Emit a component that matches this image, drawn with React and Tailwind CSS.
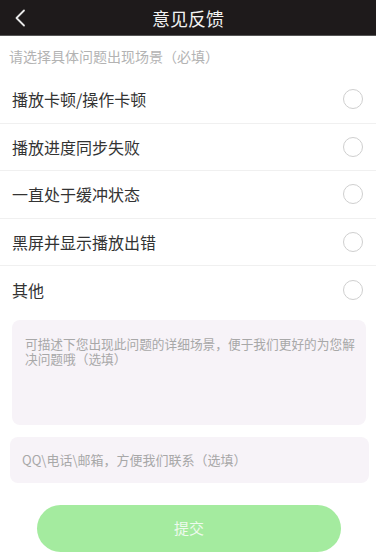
import React from "react";

const FONT = { fontFamily: '"Noto Sans CJK SC", "Noto Sans", sans-serif' };

const items = [
  "播放卡顿/操作卡顿",
  "播放进度同步失败",
  "一直处于缓冲状态",
  "黑屏并显示播放出错",
  "其他",
];

export default function App() {
  return (
    <div className="w-[376px] h-[555px] bg-white overflow-hidden flex flex-col" style={FONT}>
      <div className="h-[36px] bg-[#1e1a1b] border-b border-[#555] flex items-center relative shrink-0">
        <svg className="absolute left-[14px] top-[9px]" width="12" height="18" viewBox="0 0 12 18">
          <path d="M10 1.5 L2.5 9 L10 16.5" fill="none" stroke="#e8e8e8" strokeWidth="1.8" strokeLinecap="round" strokeLinejoin="round" />
        </svg>
        <div className="flex-1 text-center text-[18px] leading-none text-[#f2f2f2]">意见反馈</div>
      </div>
      <div className="pl-[9px] pt-[10px] h-[40px] text-[14px] leading-[20px] text-[#b3b3b3]">请选择具体问题出现场景（必填）</div>
      <div className="flex flex-col">
        {items.map((t, i) => (
          <div
            key={t}
            className={
              "h-[47.6px] flex items-center justify-between pl-[12px] pr-[13px] " +
              (i < items.length - 1 ? "border-b border-[#f0f0f0]" : "")
            }
          >
            <span className="text-[16px] text-[#333]">{t}</span>
            <span className="w-[20px] h-[20px] rounded-full border-[1.5px] border-[#cfcfcf]" />
          </div>
        ))}
      </div>
      <div className="ml-[12px] mt-[6px] mr-[10px] h-[105px] rounded-[8px] bg-[#f7f3f8] pl-[13px] pr-[4px] pt-[16px] text-[12.7px] leading-[15px] text-[#a8a8a8]">
        可描述下您出现此问题的详细场景，便于我们更好的为您解决问题哦（选填）
      </div>
      <div className="ml-[10px] mr-[7px] mt-[12px] h-[46px] rounded-[8px] bg-[#f7f3f8] flex items-center pl-[12px] text-[13px] text-[#a8a8a8]">
        QQ\电话\邮箱，方便我们联系（选填）
      </div>
      <div className="ml-[37px] mr-[35px] mt-[22px] h-[47px] rounded-full bg-[#a4eb9f] flex items-center justify-center text-[15px] text-[#eefaee]">
        提交
      </div>
    </div>
  );
}
